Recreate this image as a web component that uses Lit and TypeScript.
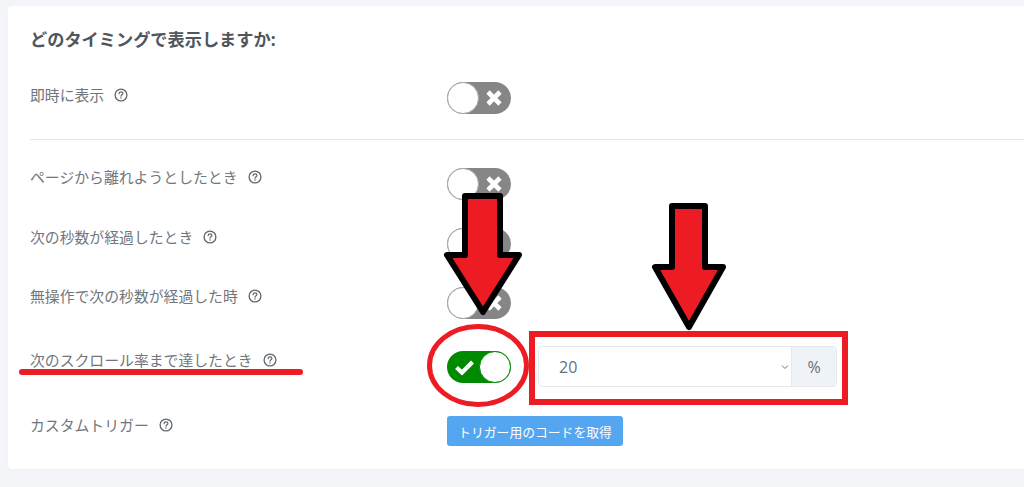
import { LitElement, html, css, svg } from "lit";
import { customElement } from "lit/decorators.js";

const help = html`<svg class="help" viewBox="0 0 14 14" width="14" height="14" aria-hidden="true">
  <circle cx="7" cy="7" r="5.9" fill="none" stroke="#5f666d" stroke-width="1.3"></circle>
  <path d="M5.1 5.6c.1-1.2.9-1.8 1.9-1.8s1.9.6 1.9 1.6c0 1.3-1.9 1.4-1.9 2.8" fill="none" stroke="#5f666d" stroke-width="1.2" stroke-linecap="round"></path>
  <circle cx="7" cy="10" r=".75" fill="#5f666d"></circle>
</svg>`;

@customElement("app-root")
export class AppRoot extends LitElement {
  static styles = css`
    :host {
      display: block;
      position: relative;
      width: 1024px;
      height: 487px;
      overflow: hidden;
      background: #f4f5f9;
      font-family: "Open Sans", "Noto Sans CJK JP", sans-serif;
      font-size: 14.85px;
      color: #70767c;
    }
    .card {
      margin: 6px 0 0 8px;
      height: 463px;
      box-sizing: border-box;
      background: #fff;
      border-radius: 4px 0 0 4px;
      padding: 22px 0 0 22px;
      box-shadow: 0 1px 3px rgba(0, 0, 0, 0.03);
    }
    h2 {
      margin: 0;
      height: 24px;
      line-height: 24px;
      font-size: 17.2px;
      font-weight: 700;
      color: #50565c;
    }
    .row {
      display: grid;
      grid-template-columns: 417px 1fr;
      align-items: start;
    }
    .first { margin-top: 30px; height: 57px; }
    .r2 { margin-top: 28px; height: 60px; }
    .r3 { height: 59px; }
    .r4 { height: 64px; }
    .r5 { height: 65px; }
    hr {
      margin: 0;
      border: 0;
      border-top: 1px solid #e3e5e8;
    }
    .label {
      display: flex;
      align-items: center;
      gap: 10px;
      height: 24px;
      line-height: 24px;
      margin-top: -3px;
      color: #70767c;
      white-space: nowrap;
    }
    .first .label { margin-top: 1px; }
    .help { flex: none; }
    .toggle {
      position: relative;
      display: block;
      width: 64px;
      height: 32px;
      border-radius: 16px;
      background: #868686;
    }
    .knob {
      position: absolute;
      top: 0;
      left: 0;
      width: 32px;
      height: 32px;
      box-sizing: border-box;
      border-radius: 50%;
      background: #fff;
      border: 1px solid #a9a9a9;
    }
    .mark {
      position: absolute;
      top: 7px;
      left: 38px;
    }
    .on { background: #008a00; }
    .on .knob { left: 32px; border-color: #008a00; }
    .on .mark { left: 7px; top: 7px; }
    .control { display: flex; gap: 27px; align-items: flex-start; }
    .group {
      display: flex;
      width: 299px;
      height: 41px;
      margin-top: -5px;
      box-sizing: border-box;
      border: 1px solid #e6e9ec;
      border-radius: 4px;
      background: #fff;
    }
    .select {
      flex: 1;
      display: flex;
      align-items: center;
      justify-content: space-between;
      padding: 0 2px 0 20px;
      color: #6a6f78;
      font-size: 16px;
    }
    .addon {
      width: 44px;
      border-left: 1px solid #e6e9ec;
      background: #eff2f6;
      display: flex;
      align-items: center;
      justify-content: center;
      color: #6a6f78;
      font-size: 16px;
      border-radius: 0 3px 3px 0;
    }
    button {
      width: 176px;
      height: 30px;
      padding: 0;
      margin: 0;
      border: 0;
      border-radius: 3px;
      background: #55a6f0;
      color: #fff;
      font: inherit;
      font-size: 12.8px;
    }
    .overlay {
      position: absolute;
      inset: 0;
      pointer-events: none;
    }
  `;

  private toggle(on = false) {
    return html`<span class="toggle ${on ? "on" : ""}">
      <span class="knob"></span>
      ${on
        ? html`<svg class="mark" width="21" height="18" viewBox="0 0 21 18"><path d="M2.5 9.5l5.5 5L18.5 4" fill="none" stroke="#fff" stroke-width="4.2"></path></svg>`
        : html`<svg class="mark" width="18" height="18" viewBox="0 0 18 18"><path d="M3 3l12 12M15 3L3 15" fill="none" stroke="#fff" stroke-width="4.6"></path></svg>`}
    </span>`;
  }

  private label(t: string) {
    return html`<div class="label"><span>${t}</span>${help}</div>`;
  }

  render() {
    return html`
      <div class="card">
        <h2>どのタイミングで表示しますか:</h2>
        <div class="row first">${this.label("即時に表示")}${this.toggle()}</div>
        <hr />
        <div class="row r2">${this.label("ページから離れようとしたとき")}${this.toggle()}</div>
        <div class="row r3">${this.label("次の秒数が経過したとき")}${this.toggle()}</div>
        <div class="row r4">${this.label("無操作で次の秒数が経過した時")}${this.toggle()}</div>
        <div class="row r5">
          ${this.label("次のスクロール率まで達したとき")}
          <div class="control">
            ${this.toggle(true)}
            <div class="group">
              <div class="select">
                <span>20</span>
                <svg width="8" height="6" viewBox="0 0 8 6"><path d="M1 1.5l3 3 3-3" fill="none" stroke="#6c757d" stroke-width="1"></path></svg>
              </div>
              <div class="addon">%</div>
            </div>
          </div>
        </div>
        <div class="row">
          ${this.label("カスタムトリガー")}
          <button>トリガー用のコードを取得</button>
        </div>
      </div>
      <svg class="overlay" width="1024" height="487" viewBox="0 0 1024 487">
        ${svg`
          <path d="M465 196H500V255H519L483 312L447 255H465Z" fill="#ed1c24" stroke="#000" stroke-width="6" stroke-linejoin="round"></path>
          <path d="M672 206H705V267H723L689 327L655 267H672Z" fill="#ed1c24" stroke="#000" stroke-width="6" stroke-linejoin="round"></path>
          <ellipse cx="478" cy="365.5" rx="48.5" ry="39" fill="none" stroke="#ed1c24" stroke-width="5"></ellipse>
          <rect x="532" y="334" width="313" height="68" fill="none" stroke="#ed1c24" stroke-width="6"></rect>
          <path d="M22 372H300" fill="none" stroke="#ed1c24" stroke-width="6" stroke-linecap="round"></path>
        `}
      </svg>
    `;
  }
}
